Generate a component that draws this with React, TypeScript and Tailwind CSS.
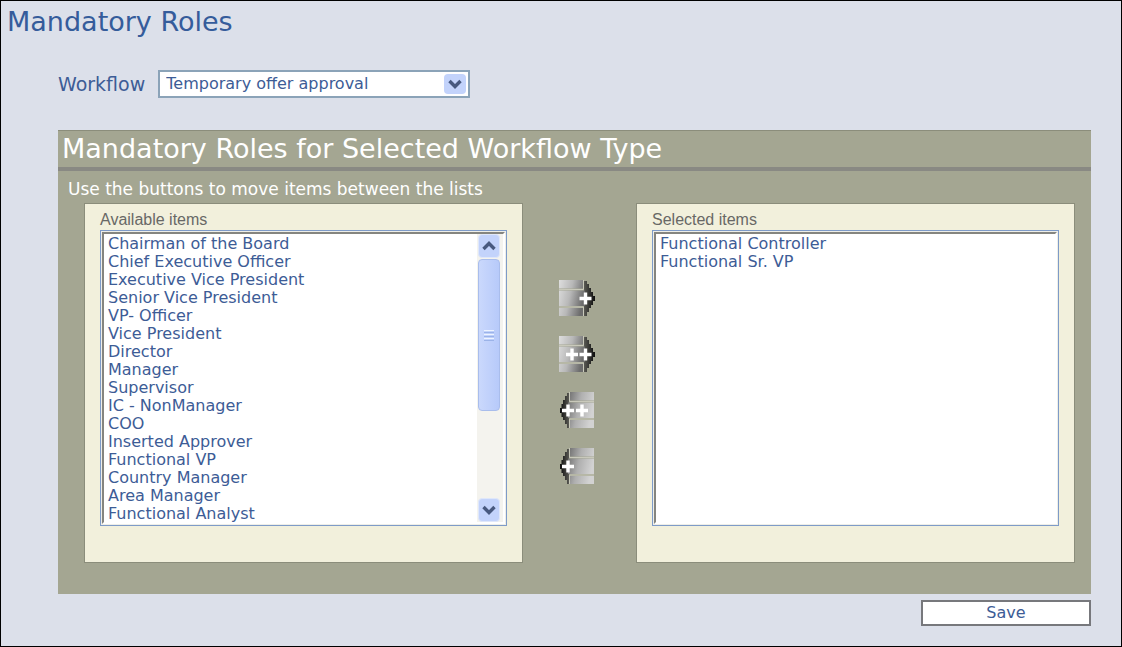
import React, { useRef, useState } from "react";

const workflows = ["Temporary offer approval", "Permanent offer approval"];

const roles = [
  "Chairman of the Board",
  "Chief Executive Officer",
  "Executive Vice President",
  "Senior Vice President",
  "VP- Officer",
  "Vice President",
  "Director",
  "Manager",
  "Supervisor",
  "IC - NonManager",
  "COO",
  "Inserted Approver",
  "Functional VP",
  "Country Manager",
  "Area Manager",
  "Functional Analyst",
  "Functional Director",
  "Functional Manager",
  "Regional Manager",
  "Regional Director",
  "Regional VP",
  "HR Manager",
  "HR Director",
];

const Chevron: React.FC<{ up?: boolean }> = ({ up }) => (
  <svg width="16" height="12" viewBox="0 0 16 12" fill="none" stroke="#48597f" strokeWidth="3.4" aria-hidden="true">
    <path d={up ? "M2.5 9 8 3.5 13.5 9" : "M2.5 3 8 8.5 13.5 3"} />
  </svg>
);

// striped block with an arrow head, mirrored when it points left
const MoveIcon: React.FC<{ id: string; left?: boolean; all?: boolean }> = ({ id, left, all }) => {
  const single = left ? "M9 12.5v12M3 18.5h12" : "M26.5 12.5v12M20.5 18.5h12";
  const second = left ? "M23 12.5v12M17 18.5h12" : "M13 12.5v12M7 18.5h12";
  return (
    <svg width="38" height="38" viewBox="0 0 38 38" aria-hidden="true">
      <defs>
        <linearGradient id={id + "-bar"} x2="1" y2="0.3">
          <stop offset="0" stopColor={left ? "#6c6c6c" : "#dedede"} />
          <stop offset="0.5" stopColor={left ? "#b0b0b0" : "#b8b8b8"} />
          <stop offset="1" stopColor={left ? "#d2d2d2" : "#6c6c6c"} />
        </linearGradient>
        <linearGradient id={id + "-head"}>
          <stop offset="0" stopColor={left ? "#0c0c0c" : "#5a5a54"} />
          <stop offset="1" stopColor={left ? "#5a5a54" : "#0c0c0c"} />
        </linearGradient>
      </defs>
      {left ? (
        <>
          <path d="M10 1H8v3H6v4H4v4H2.5v4H1v5h1.5v4H4v3h2v4h2v4h2z" fill={"url(#" + id + "-head)"} />
          <path d="M11 0h24v8.500H11zM9 10.5h26V26H9zM11 28h24v8H11z" fill={"url(#" + id + "-bar)"} />
          <path d="M10.5 0v9.500H35M35 27H10.5v9" fill="none" stroke="#c9c9bb" />
        </>
      ) : (
        <>
          <path d="M25 1h3v3h2v4h2v4h2v4h2v5h-2v4h-2v3h-2v4h-2v4h-3z" fill={"url(#" + id + "-head)"} />
          <path d="M0 0h24v8.500H0zM0 10.5h26V26H0zM0 28h24v8H0z" fill={"url(#" + id + "-bar)"} />
          <path d="M0 9.500h24.5V0M0 27h24.5v9" fill="none" stroke="#c9c9bb" />
        </>
      )}
      <path d={all ? single + second : single} stroke="#fff" strokeWidth="3.4" fill="none" />
    </svg>
  );
};

interface ListProps {
  id: string;
  label: string;
  items: string[];
  picked: string[];
  onPick: (items: string[]) => void;
}

const RoleList: React.FC<ListProps> = ({ id, label, items, picked, onPick }) => {
  const list = useRef<HTMLSelectElement>(null);
  const scroll = (by: number) => list.current?.scrollBy({ top: by });

  return (
    <div className="min-w-0 flex-1 border border-[#8b8d7b] bg-[#f2f0dc] px-[15px] pt-[5px] pb-9">
      <label htmlFor={id} className="block font-['Liberation_Sans',sans-serif] text-base leading-[21px] text-[#686866]">
        {label}
      </label>
      <div className="border border-[#7e9bc8] bg-[#eeeee8] p-px">
        <div className="flex border-2 border-t-[#85857f] border-l-[#85857f] border-r-white border-b-white bg-white">
          <select
            id={id}
            multiple
            ref={list}
            value={picked}
            onChange={(e) => onPick(Array.from(e.target.selectedOptions, (o) => o.value))}
            className="h-[288px] min-w-0 flex-1 appearance-none overflow-y-auto bg-white p-0 text-base text-[#3d5c96] outline-none [scrollbar-width:none]"
          >
            {items.map((item) => (
              <option key={item} value={item} className="h-[18px] min-h-0 px-1 py-0 leading-[18px]">
                {item}
              </option>
            ))}
          </select>
          {items.length > 16 && (
            <div className="flex w-[26px] flex-col items-center bg-[#f4f3ee] pr-[3px] pl-px">
              <button
                type="button"
                aria-label="Scroll up"
                onClick={() => scroll(-18)}
                className="flex h-6 w-full items-center justify-center rounded-sm border border-[#dfe7fa] bg-[#c3d3fb]"
              >
                <Chevron up />
              </button>
              <div className="flex w-full flex-1 flex-col">
                <div className="mt-px flex h-[152px] flex-col items-center justify-center gap-px rounded-sm border border-[#a9bdec] bg-linear-to-r from-[#cad8fc] to-[#b7cafa]">
                  <span className="h-px w-2.5 bg-[#eef4fe]" />
                  <span className="h-px w-2.5 bg-[#9bb3e8]" />
                  <span className="h-px w-2.5 bg-[#eef4fe]" />
                  <span className="h-px w-2.5 bg-[#9bb3e8]" />
                  <span className="h-px w-2.5 bg-[#eef4fe]" />
                  <span className="h-px w-2.5 bg-[#9bb3e8]" />
                </div>
              </div>
              <button
                type="button"
                aria-label="Scroll down"
                onClick={() => scroll(18)}
                className="flex h-6 w-full items-center justify-center rounded-sm border border-[#dfe7fa] bg-[#c3d3fb]"
              >
                <Chevron />
              </button>
            </div>
          )}
        </div>
      </div>
    </div>
  );
};

const App: React.FC = () => {
  const [workflow, setWorkflow] = useState(workflows[0]);
  const [available, setAvailable] = useState(roles);
  const [selected, setSelected] = useState(["Functional Controller", "Functional Sr. VP"]);
  const [pickedLeft, setPickedLeft] = useState<string[]>([]);
  const [pickedRight, setPickedRight] = useState<string[]>([]);

  const add = (items: string[]) => {
    setSelected([...selected, ...items]);
    setAvailable(available.filter((r) => !items.includes(r)));
    setPickedLeft([]);
  };
  const remove = (items: string[]) => {
    setAvailable([...available, ...items]);
    setSelected(selected.filter((r) => !items.includes(r)));
    setPickedRight([]);
  };

  return (
    <main className="min-h-screen border border-black bg-[#dce0ea] font-['DejaVu_Sans',sans-serif] text-[#3d5c96]">
      <h1 className="px-1.5 pt-[5px] text-[27px] leading-8 text-[#355c9b]">Mandatory Roles</h1>

      <form className="pt-8 pr-[30px] pl-[57px]" onSubmit={(e) => e.preventDefault()}>
        <div className="flex items-center gap-[13px]">
          <label htmlFor="workflow" className="text-[19px] leading-7">
            Workflow
          </label>
          <div className="relative w-[312px]">
            <select
              id="workflow"
              value={workflow}
              onChange={(e) => setWorkflow(e.target.value)}
              className="block h-7 w-full appearance-none border-2 border-[#8ba3b8] bg-white pr-8 pl-1.5 text-base outline-none"
            >
              {workflows.map((w) => (
                <option key={w}>{w}</option>
              ))}
            </select>
            <span className="pointer-events-none absolute top-1 right-1 flex h-5 w-[22px] items-center justify-center rounded-sm bg-[#c3d3fb]">
              <Chevron />
            </span>
          </div>
        </div>

        <section className="mt-8 bg-[#a4a692] pb-[31px]">
          <h2 className="border-t border-b-4 border-t-[#8b8d7b] border-b-[#898983] px-1 text-[27px] leading-9 text-white">
            Mandatory Roles for Selected Workflow Type
          </h2>
          <p className="px-2.5 pt-1 text-[17px] leading-7 text-white">Use the buttons to move items between the lists</p>
          <div className="flex pr-4 pl-[26px]">
            <RoleList id="available" label="Available items" items={available} picked={pickedLeft} onPick={setPickedLeft} />
            <div className="flex w-[113px] flex-col items-start gap-[18px] pt-[77px] pl-9">
              <button type="button" aria-label="Add" onClick={() => add(pickedLeft)}>
                <MoveIcon id="add" />
              </button>
              <button type="button" aria-label="Add all" onClick={() => add(available)}>
                <MoveIcon id="add-all" all />
              </button>
              <button type="button" aria-label="Remove all" onClick={() => remove(selected)}>
                <MoveIcon id="remove-all" left all />
              </button>
              <button type="button" aria-label="Remove" onClick={() => remove(pickedRight)}>
                <MoveIcon id="remove" left />
              </button>
            </div>
            <RoleList id="selected" label="Selected items" items={selected} picked={pickedRight} onPick={setPickedRight} />
          </div>
        </section>

        <div className="flex justify-end pt-1.5">
          <button type="submit" className="h-[26px] w-[170px] border-2 border-[#77787c] bg-white text-base leading-5">
            Save
          </button>
        </div>
      </form>
    </main>
  );
};

export default App;
